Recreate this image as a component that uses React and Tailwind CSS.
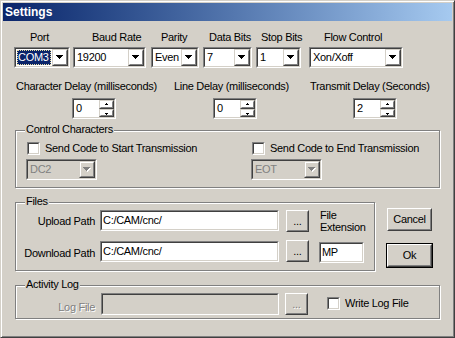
import React from "react";

// classic 3D edges
const Sunken = ({ className = "", inner = "", children }) => (
  <div className={`flex border border-t-[#808080] border-l-[#808080] border-r-white border-b-white ${className}`}>
    <div className={`flex flex-1 min-w-0 border border-t-[#404040] border-l-[#404040] border-r-[#d4d0c8] border-b-[#d4d0c8] ${inner}`}>
      {children}
    </div>
  </div>
);

const Raised = ({ className = "", flat, children }) => (
  <div
    className={`flex border ${
      flat ? "border-t-[#d4d0c8] border-l-[#d4d0c8]" : "border-t-white border-l-white"
    } border-r-[#404040] border-b-[#404040] ${className}`}
  >
    <div
      className={`flex flex-1 min-w-0 items-center justify-center border ${
        flat ? "border-t-white border-l-white" : "border-t-[#d4d0c8] border-l-[#d4d0c8]"
      } border-r-[#808080] border-b-[#808080]`}
    >
      {children}
    </div>
  </div>
);

const DownArrow = ({ disabled }) => (
  <svg width="8" height="5" viewBox="0 0 8 5" shapeRendering="crispEdges">
    {disabled && <path d="M1 1h7v1H1z M2 2h5v1H2z M3 3h3v1H3z M4 4h1v1H4z" fill="#fff" />}
    <path d="M0 0h7v1H0z M1 1h5v1H1z M2 2h3v1H2z M3 3h1v1H3z" fill={disabled ? "#808080" : "#000"} />
  </svg>
);

const SmallArrow = ({ up }) => (
  <svg width="5" height="3" viewBox="0 0 5 3" shapeRendering="crispEdges">
    <path d={up ? "M2 0h1v1H2z M1 1h3v1H1z" : "M1 1h3v1H1z M2 2h1v1H2z"} fill="#000" />
  </svg>
);

const Combo = ({ w, value, selected, disabled, className = "" }) => (
  <Sunken className={`h-[21px] ${w} ${className}`} inner={disabled ? "bg-[#d4d0c8]" : "bg-white"}>
    {selected ? (
      <div className="flex-1 min-w-0 m-[1px] flex items-center bg-[#0a246a] text-white border border-dotted border-[#e8dca0]">
        {value}
      </div>
    ) : (
      <div className={`flex-1 min-w-0 flex items-center pl-[2px] ${disabled ? "text-[#808080]" : ""}`}>{value}</div>
    )}
    <Raised flat className="w-[16px] h-full">
      <DownArrow disabled={disabled} />
    </Raised>
  </Sunken>
);

const Spin = ({ value, className = "" }) => (
  <Sunken className={`w-[44px] h-[21px] ${className}`} inner="bg-white">
    <div className="flex-1 flex items-center pl-[2px]">{value}</div>
    <div className="flex flex-col w-[15px]">
      <Raised flat className="h-[9px]">
        <SmallArrow up />
      </Raised>
      <Raised flat className="h-[8px]">
        <SmallArrow />
      </Raised>
    </div>
  </Sunken>
);

const Check = ({ className = "" }) => <Sunken className={`w-[13px] h-[13px] shrink-0 ${className}`} inner="bg-white" />;

const Group = ({ title, className = "", children }) => (
  <div className={`relative border border-[#808080] shadow-[inset_1px_1px_0_#fff,1px_1px_0_#fff] ${className}`}>
    <div className="absolute left-[9px] top-[-8px] px-[1px] bg-[#d4d0c8] whitespace-nowrap">{title}</div>
    {children}
  </div>
);

const Edit = ({ value, className = "", disabled }) => (
  <Sunken className={`h-[21px] ${className}`} inner={disabled ? "bg-[#d4d0c8]" : "bg-white"}>
    <div className="flex-1 flex items-center pl-[1px] whitespace-nowrap">{value}</div>
  </Sunken>
);

const Dots = ({ className = "", disabled }) => (
  <Raised className={`w-[23px] h-[22px] ${className}`}>
    <span className={disabled ? "text-[#808080] [text-shadow:1px_1px_0_#fff]" : ""}>...</span>
  </Raised>
);

const topRow = [
  { label: "Port", w: "w-[56px]", ml: "", pl: "pl-[16px]", value: "COM3", selected: true },
  { label: "Baud Rate", w: "w-[73px]", ml: "ml-[3px]", pl: "pl-[19px]", value: "19200" },
  { label: "Parity", w: "w-[48px]", ml: "ml-[5px]", pl: "pl-[10px]", value: "Even" },
  { label: "Data Bits", w: "w-[49px]", ml: "ml-[4px]", pl: "pl-[6px]", value: "7" },
  { label: "Stop Bits", w: "w-[45px]", ml: "ml-[4px]", pl: "pl-[5px]", value: "1" },
  { label: "Flow Control", w: "w-[94px]", ml: "ml-[8px]", pl: "pl-[15px]", value: "Xon/Xoff" },
];

export default function App() {
  return (
    <div className="w-[455px] h-[338px] flex flex-col p-[2px] bg-[#d4d0c8] border border-t-[#d4d0c8] border-l-[#d4d0c8] border-r-[#404040] border-b-[#404040] shadow-[inset_1px_1px_0_#fff,inset_-1px_-1px_0_#808080] font-['Liberation_Sans',Arial,sans-serif] text-[11px] leading-[13px] tracking-[-0.3px] text-black select-none">
      {/* title bar */}
      <div className="h-[18px] shrink-0 flex items-center pl-[2px] bg-linear-to-r from-[#0a246a] to-[#a6caf0]">
        <span className="text-white font-bold text-[12px] leading-[18px] tracking-normal">Settings</span>
      </div>

      <div className="flex-1 flex flex-col">
        {/* port settings */}
        <div className="flex pl-[11px] mt-[10px]">
          {topRow.map((c) => (
            <div key={c.label} className={`flex flex-col ${c.w} ${c.ml}`}>
              <div className={`h-[13px] whitespace-nowrap ${c.pl}`}>{c.label}</div>
              <Combo w={c.w} value={c.value} selected={c.selected} className="mt-[3px]" />
            </div>
          ))}
        </div>

        {/* delays */}
        <div className="flex pl-[13px] mt-[12px]">
          <div className="flex flex-col w-[158px]">
            <div className="whitespace-nowrap">Character Delay (milliseconds)</div>
            <Spin value="0" className="mt-[5px] ml-[56px]" />
          </div>
          <div className="flex flex-col w-[136px]">
            <div className="whitespace-nowrap">Line Delay (milliseconds)</div>
            <Spin value="0" className="mt-[5px] ml-[39px]" />
          </div>
          <div className="flex flex-col">
            <div className="whitespace-nowrap">Transmit Delay (Seconds)</div>
            <Spin value="2" className="mt-[5px] ml-[43px]" />
          </div>
        </div>

        {/* control characters */}
        <Group title="Control Characters" className="ml-[12px] mt-[11px] w-[425px] h-[58px]">
          <div className="flex pl-[10px] pt-[11px]">
            <div className="flex flex-col w-[225px]">
              <div className="flex items-center h-[13px] ml-[1px]">
                <Check />
                <span className="ml-[5px] whitespace-nowrap">Send Code to Start Transmission</span>
              </div>
              <Combo w="w-[71px]" value="DC2" disabled className="mt-[4px]" />
            </div>
            <div className="flex flex-col">
              <div className="flex items-center h-[13px] ml-[1px]">
                <Check />
                <span className="ml-[5px] whitespace-nowrap">Send Code to End Transmission</span>
              </div>
              <Combo w="w-[71px]" value="EOT" disabled className="mt-[4px]" />
            </div>
          </div>
        </Group>

        {/* files + buttons */}
        <div className="flex mt-[14px]">
          <Group title="Files" className="ml-[12px] w-[360px] h-[69px]">
            <div className="flex flex-col pt-[7px]">
              <div className="flex items-start">
                <div className="w-[79px] text-right mt-[5px] whitespace-nowrap">Upload Path</div>
                <Edit value="C:/CAM/cnc/" className="ml-[5px] w-[179px]" />
                <Dots className="ml-[7px]" />
                <div className="ml-[11px] mt-[-1px] leading-[12px]">
                  File
                  <br />
                  Extension
                </div>
              </div>
              <div className="flex items-start mt-[7px]">
                <div className="w-[79px] text-right mt-[7px] whitespace-nowrap">Download Path</div>
                <Edit value="C:/CAM/cnc/" className="ml-[5px] mt-[1px] w-[179px]" />
                <Dots className="ml-[7px]" />
                <Edit value="MP" className="ml-[10px] mt-[2px] w-[45px]" />
              </div>
            </div>
          </Group>
          <div className="flex flex-col ml-[11px] mt-[6px]">
            <Raised className="ml-[1px] w-[45px] h-[23px]">Cancel</Raised>
            <div className="mt-[12px] w-[47px] h-[25px] flex border border-black">
              <Raised className="flex-1">Ok</Raised>
            </div>
          </div>
        </div>

        {/* activity log */}
        <Group title="Activity Log" className="ml-[12px] mt-[14px] w-[425px] h-[34px]">
          <div className="flex items-start pt-[7px]">
            <div className="w-[79px] text-right mt-[8px] text-[#808080] [text-shadow:1px_1px_0_#fff] whitespace-nowrap">
              Log File
            </div>
            <Edit value="" disabled className="ml-[6px] w-[178px] h-[22px]" />
            <Dots disabled className="ml-[6px]" />
            <div className="flex items-center ml-[19px] mt-[4px] h-[13px]">
              <Check />
              <span className="ml-[5px] whitespace-nowrap">Write Log File</span>
            </div>
          </div>
        </Group>
      </div>
    </div>
  );
}
